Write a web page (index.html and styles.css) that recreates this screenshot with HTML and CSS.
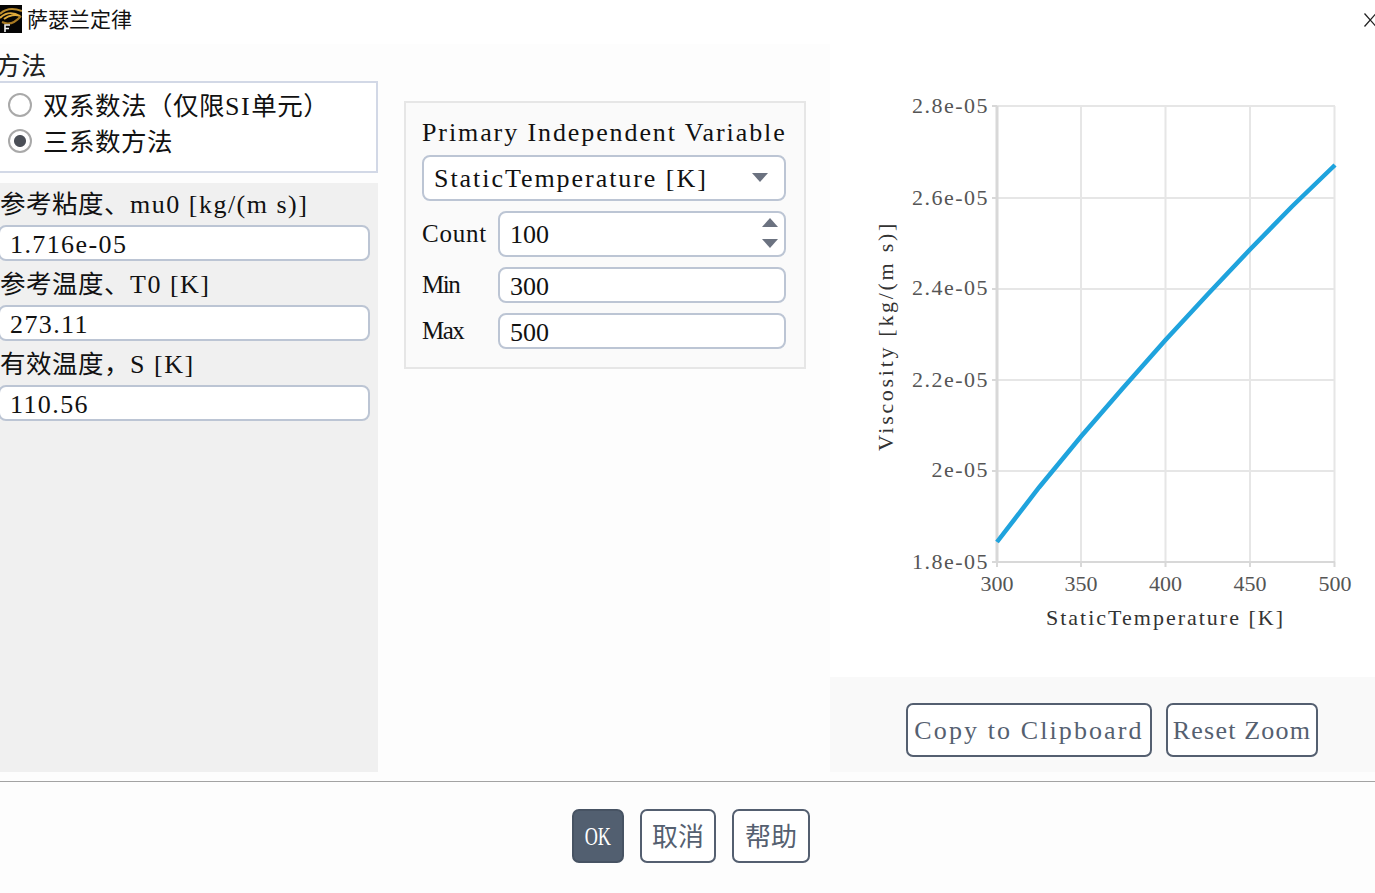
FILE: index.html
```html
<!DOCTYPE html>
<html lang="zh">
<head>
    <meta charset="UTF-8">
    <title>萨瑟兰定律</title>
    <link rel="stylesheet" href="styles.css">
</head>
<body>
    <header class="titlebar">
        <svg class="app-icon" viewBox="0 0 22 28" width="22" height="28">
            <rect width="22" height="28" fill="#050505"/>
            <path d="M0 9C6 3 14 3 22 6" fill="none" stroke="#b98a2c" stroke-width="2"/>
            <path d="M0 13C7 6 15 8 20 11C16 9 9 10 4 14" fill="none" stroke="#e0aa3a" stroke-width="2"/>
            <path d="M2 17C8 20 15 18 21 11" fill="none" stroke="#a87a22" stroke-width="2"/>
            <path d="M5 27V20H10M5 23.5H9" fill="none" stroke="#f2f2f2" stroke-width="1.6"/>
        </svg>
        <span class="title-text">萨瑟兰定律</span>
        <svg class="close-icon" viewBox="0 0 12 14" width="12" height="14">
            <path d="M0.5 0.5L12 13.5M12 0.5L0.5 13.5" fill="none" stroke="#222" stroke-width="1.3"/>
        </svg>
    </header>

    <main class="dialog">
        <section class="col-left">
            <div class="group-label zh">方法</div>
            <div class="radio-box">
                <label class="radio-row"><input type="radio" name="method"><span class="radio-text"><span class="zh">双系数法（仅限</span>SI<span class="zh">单元）</span></span></label>
                <label class="radio-row"><input type="radio" name="method" checked><span class="radio-text zh">三系数方法</span></label>
            </div>
            <div class="coeff-panel">
                <div class="field">
                    <label><span class="zh">参考粘度、</span>mu0 [kg/(m s)]</label>
                    <input class="text-input" type="text" value="1.716e-05">
                </div>
                <div class="field">
                    <label><span class="zh">参考温度、</span>T0 [K]</label>
                    <input class="text-input" type="text" value="273.11">
                </div>
                <div class="field">
                    <label><span class="zh">有效温度，</span>S [K]</label>
                    <input class="text-input" type="text" value="110.56">
                </div>
            </div>
        </section>

        <section class="variable-panel">
            <div class="variable-title">Primary Independent Variable</div>
            <div class="select-box">
                <span>StaticTemperature [K]</span>
                <svg class="select-arrow" viewBox="0 0 16 9" width="16" height="9"><path d="M0 0H16L8 9Z" fill="#6b7280"/></svg>
            </div>
            <div class="range-row tall">
                <label>Count</label>
                <div class="spin-box">
                    <span class="digits">100</span>
                    <svg class="spin-arrows" viewBox="0 0 16 30" width="16" height="30">
                        <path d="M0 9L8 0L16 9Z" fill="#6b7280"/>
                        <path d="M0 21H16L8 30Z" fill="#6b7280"/>
                    </svg>
                </div>
            </div>
            <div class="range-row">
                <label>Min</label>
                <input class="text-input digits" type="text" value="300">
            </div>
            <div class="range-row">
                <label>Max</label>
                <input class="text-input digits" type="text" value="500">
            </div>
        </section>

        <section class="col-chart">
            <div class="plot">
                <svg class="plot-svg" viewBox="830 44 545 633" width="545" height="633">
                    <g class="grid">
                        <path d="M997 106H1335M997 198H1335M997 289H1335M997 380H1335M997 471H1335"/>
                        <path d="M1081 106V562M1165.500 106V562M1250 106V562M1334.500 106V562"/>
                    </g>
                    <g class="axis">
                        <path class="axis-y" d="M997 106V562"/>
                        <path d="M997 562H1335"/>
                        <path class="ticks" d="M992 106H997M992 198H997M992 289H997M992 380H997M992 471H997M992 562H997M997 562V567M1081 562V567M1165.500 562V567M1250 562V567M1334.500 562V567"/>
                    </g>
                    <polyline class="curve" points="997,542 1039,487.500 1081,436.500 1123,388 1165.500,340 1208,294 1250,249.500 1292,206.500 1335,165"/>
                    <g class="tick-y">
                        <text x="989" y="113">2.8e-05</text>
                        <text x="989" y="205">2.6e-05</text>
                        <text x="989" y="295">2.4e-05</text>
                        <text x="989" y="387">2.2e-05</text>
                        <text x="989" y="477">2e-05</text>
                        <text x="989" y="569">1.8e-05</text>
                    </g>
                    <g class="tick-x">
                        <text x="997" y="591">300</text>
                        <text x="1081" y="591">350</text>
                        <text x="1165.500" y="591">400</text>
                        <text x="1250" y="591">450</text>
                        <text x="1335" y="591">500</text>
                    </g>
                    <text class="axis-title" x="1165.500" y="625">StaticTemperature [K]</text>
                    <text class="axis-title y-title" transform="translate(893 336) rotate(-90)">Viscosity [kg/(m s)]</text>
                </svg>
            </div>
            <div class="plot-tools">
                <button class="btn tool-btn copy-btn">Copy to Clipboard</button>
                <button class="btn tool-btn reset-btn">Reset Zoom</button>
            </div>
        </section>
    </main>

    <footer class="actions">
        <button class="btn action-btn primary"><span>OK</span></button>
        <button class="btn action-btn zh cancel-btn">取消</button>
        <button class="btn action-btn zh help-btn">帮助</button>
    </footer>
</body>
</html>
```

FILE: styles.css
```css
* {
    box-sizing: border-box;
}

html, body {
    height: 893px;
    overflow: hidden;
}

body {
    margin: 0;
    width: 1375px;
    background-color: #fdfdfd;
    color: #111;
    font-family: "Liberation Serif", "Noto Sans CJK SC", serif;
    font-size: 26px;
    letter-spacing: 1.5px;
}

.zh {
    font-family: "Noto Sans CJK SC", sans-serif;
    font-size: 25.5px;
    letter-spacing: 0.5px;
}

.digits {
    letter-spacing: 0;
}

.titlebar {
    display: flex;
    align-items: center;
    height: 44px;
    padding-bottom: 8px;
    background-color: #fff;
}

.app-icon {
    margin-top: 2px;
    flex: none;
}

.title-text {
    margin-left: 5px;
    font-family: "Noto Sans CJK SC", sans-serif;
    font-size: 21px;
    letter-spacing: 0;
}

.close-icon {
    margin-left: auto;
    margin-top: 4px;
    flex: none;
    transform: translateX(1px);
}

.dialog {
    display: flex;
    height: 738px;
    padding-bottom: 9px;
    border-bottom: 1px solid #a3a3a3;
}

/* left column runs slightly off the window edge */
.col-left {
    display: flex;
    flex-direction: column;
    flex: none;
    width: 383px;
    margin-left: -5px;
    padding-top: 5px;
}

.group-label {
    height: 32px;
    line-height: 30px;
    color: #222;
}

.radio-box {
    height: 92px;
    padding: 4px 0 0 11px;
    background-color: #fff;
    border: 2px solid #d2d8e6;
}

.radio-row {
    display: flex;
    align-items: center;
    gap: 11px;
    height: 36px;
}

.radio-row input {
    appearance: none;
    flex: none;
    width: 24px;
    height: 24px;
    margin: 0;
    border: 2px solid #a9a9a9;
    border-radius: 50%;
    background-color: #fff;
}

.radio-row input:checked {
    background: radial-gradient(circle, #4b4f57 0 5.5px, #fff 6.5px);
}

.radio-text {
    padding-bottom: 4px;
}

.coeff-panel {
    display: flex;
    flex-direction: column;
    gap: 2px;
    flex: 1;
    margin-top: 10px;
    padding-left: 3px;
    background-color: #f0f0f0;
}

.field label {
    display: block;
    height: 42px;
    padding-left: 2px;
    line-height: 38px;
    white-space: nowrap;
}

.field .text-input {
    width: 372px;
    padding-top: 4px;
}

.text-input {
    display: block;
    height: 36px;
    padding: 3px 10px 0;
    font: inherit;
    letter-spacing: 1.4px;
    color: #111;
    background-color: #fff;
    border: 2px solid #bcc5d4;
    border-radius: 8px;
    outline: none;
}

.text-input.digits {
    letter-spacing: 0;
}

.variable-panel {
    flex: none;
    align-self: flex-start;
    width: 402px;
    height: 268px;
    margin: 57px 0 0 26px;
    padding: 8px 18px 0 16px;
    background-color: #fafafa;
    border: 2px solid #e6e6e6;
}

.variable-title {
    height: 44px;
    line-height: 44px;
    letter-spacing: 1.900px;
    white-space: nowrap;
}

.select-box,
.spin-box {
    display: flex;
    align-items: center;
    height: 46px;
    padding: 2px 16px 0 10px;
    background-color: #fff;
    border: 2px solid #bcc5d4;
    border-radius: 8px;
}

.select-box {
    justify-content: space-between;
    letter-spacing: 1.950px;
}

.select-arrow {
    margin-top: -4px;
}

.range-row {
    display: flex;
    align-items: center;
    margin-top: 10px;
}

.range-row label {
    flex: none;
    width: 76px;
    font-size: 25px;
    letter-spacing: -1.500px;
}

.range-row.tall label {
    letter-spacing: 0.8px;
}

.range-row .text-input,
.range-row .spin-box {
    flex: 1;
    min-width: 0;
    width: 288px;
}

.spin-box {
    justify-content: space-between;
    padding-right: 6px;
}

.spin-arrows {
    margin-top: -4px;
}

.col-chart {
    display: flex;
    flex-direction: column;
    flex: none;
    width: 545px;
    margin-left: 24px;
}

.plot {
    height: 633px;
    background-color: #fff;
}

.plot-svg {
    display: block;
}

.grid path {
    fill: none;
    stroke: #e6e6e6;
    stroke-width: 2;
}

.axis path {
    fill: none;
    stroke: #d8d8d8;
    stroke-width: 2;
}

.axis .axis-y {
    stroke-width: 3;
}

.curve {
    fill: none;
    stroke: #1fa3dd;
    stroke-width: 4.500;
}

.tick-y text,
.tick-x text {
    font-size: 22px;
    fill: #555;
}

.tick-y text {
    letter-spacing: 1.500px;
    text-anchor: end;
}

.tick-x text {
    letter-spacing: 0;
    text-anchor: middle;
}

.axis-title {
    font-size: 22px;
    letter-spacing: 2px;
    fill: #333;
    text-anchor: middle;
}

.y-title {
    letter-spacing: 2.700px;
}

.plot-tools {
    display: flex;
    justify-content: flex-end;
    gap: 14px;
    flex: 1;
    padding: 26px 57px 0 0;
    background-color: #f9f9f9;
}

.btn {
    font: inherit;
    letter-spacing: inherit;
    color: #556070;
    background-color: #fff;
    border: 2px solid #545f70;
    border-radius: 7px;
    cursor: pointer;
}

.tool-btn {
    height: 54px;
    padding: 2px 0 0;
    white-space: nowrap;
}

.copy-btn {
    width: 246px;
    letter-spacing: 2.100px;
}

.reset-btn {
    width: 152px;
    letter-spacing: 1.200px;
}

.actions {
    display: flex;
    justify-content: center;
    gap: 16px;
    padding: 27px 0 0 7px;
}

.action-btn {
    height: 54px;
    padding: 0;
}

.action-btn.zh {
    padding-bottom: 4px;
    font-family: "Noto Sans CJK SC", sans-serif;
    font-size: 26px;
    letter-spacing: 0;
}

.cancel-btn {
    width: 76px;
}

.help-btn {
    width: 78px;
}

.action-btn.primary {
    width: 52px;
    padding: 2px 0 0;
    letter-spacing: 0;
    color: #fff;
    background-color: #525f70;
    border-color: #475363;
}

.action-btn.primary span {
    display: inline-block;
    transform: scaleX(0.7);
}
```
